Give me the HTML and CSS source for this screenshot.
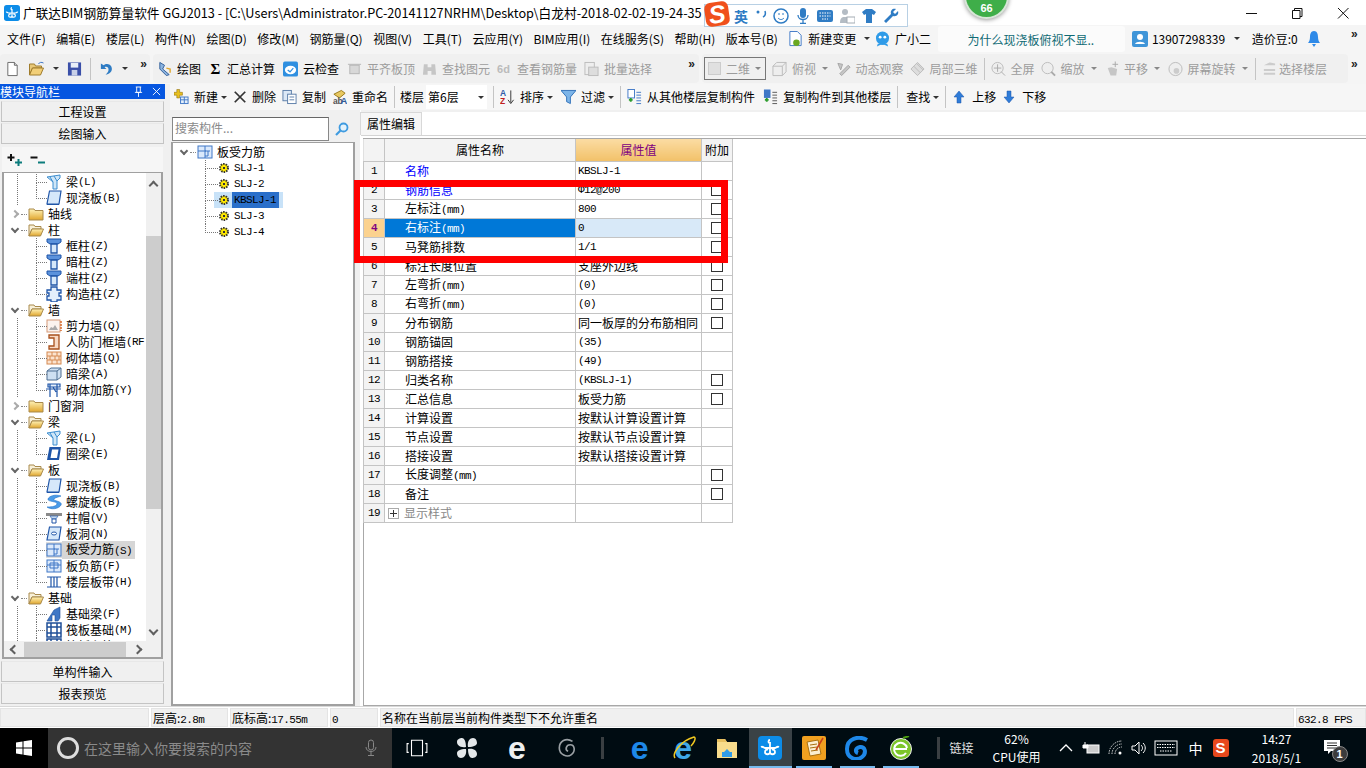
FILE: index.html
```html
<!DOCTYPE html>
<html lang="zh-CN">

<head>
    <meta charset="UTF-8">
    <title>广联达BIM钢筋算量软件 GGJ2013</title>
    <link rel="stylesheet" href="styles.css">
</head>

<body>
    <svg class="defs" width="0" height="0">
        <defs>
            <linearGradient id="gy" x1="0" y1="0" x2="0" y2="1"><stop offset="0" stop-color="#fff3b8"/><stop offset="1" stop-color="#e0a52c"/></linearGradient>
            <symbol id="folder" viewBox="0 0 16 16"><path d="M1 3h5l1 1.500h8V14H1z" fill="url(#gy)" stroke="#a98a4c"/></symbol>
            <symbol id="folderopen" viewBox="0 0 16 16"><path d="M1 3h5l1 1.500h6V7H4L1 14z" fill="#f8f0d8" stroke="#a98a4c"/><path d="M4 7h11.500L12.500 14H1z" fill="url(#gy)" stroke="#a98a4c"/></symbol>
            <symbol id="beam" viewBox="0 0 16 16"><path d="M1 3l13-2v3L11 7v8H7V8z" fill="#cfe6f7" stroke="#3d8ed0"/><path d="M4 3l3 5M8 2l3 5" stroke="#3d8ed0" fill="none"/></symbol>
            <symbol id="slab" viewBox="0 0 16 16"><path d="M3.500 1H15l-2 13H1z" fill="#d6e8fa" stroke="#1f55a8" stroke-width="1.200"/><path d="M1 14.500h12" stroke="#1f55a8"/></symbol>
            <symbol id="ring" viewBox="0 0 16 16"><path d="M3.500 1H15l-2 13H1z" fill="#1f55a8"/><path d="M6 3.500h6.500L11 12H4.500z" fill="#fff"/></symbol>
            <symbol id="col" viewBox="0 0 16 16"><path d="M1 1h14v3l-3 2H4L1 4z" fill="#5b92dc" stroke="#1f55a8"/><path d="M5 6h6v9H5z" fill="#d6e8fa" stroke="#1f55a8" stroke-width="1.300"/></symbol>
            <symbol id="gzz" viewBox="0 0 16 16"><path d="M5 1h6v3h4v3h-2v3h2v4h-4v2H5v-2H1v-4h2V7H1V4h4z" fill="#e4effb" stroke="#1f55a8" stroke-width="1.300"/></symbol>
            <symbol id="shear" viewBox="0 0 16 16"><rect x="1" y="2" width="13" height="12" fill="#fbf3ee" stroke="#d59a78"/><path d="M3 12l2-3 2 1 2-3 3 5z" fill="#a9a9a9"/><path d="M15 3v10" stroke="#d8692a" stroke-dasharray="2 1" stroke-width="1.500"/></symbol>
            <symbol id="door" viewBox="0 0 16 16"><path d="M3 1h10v14H3v-3h5V4H3z" fill="#f8d9c4" stroke="#a8501c" stroke-width="1.300"/></symbol>
            <symbol id="brick" viewBox="0 0 16 16"><rect x="1" y="2" width="14" height="12" fill="#fbe3cf" stroke="#d58a52"/><path d="M1 6h14M1 10h14M6 2v4M11 2v4M4 6v4M9 6v4M13 6v4M6 10v4M11 10v4" stroke="#d58a52" fill="none"/></symbol>
            <symbol id="hbeam" viewBox="0 0 16 16"><path d="M1 5l4-3h10v9l-4 3H1z" fill="#cfe0f2" stroke="#4f6f92"/><path d="M1 5h10v9M11 5l4-3" stroke="#4f6f92" fill="none"/></symbol>
            <symbol id="rebarw" viewBox="0 0 16 16"><path d="M2 2h12v3H2zM0 7h15M4 2v13M11 2v13M7 5l3 5" stroke="#1f55a8" fill="#e4effb" stroke-width="1.200"/></symbol>
            <symbol id="spiral" viewBox="0 0 16 16"><path d="M15 2C9 0 3 2 2 5s10 2 9 5-8 3-10 3c4 3 12 2 14-2S6 7 8 5s5-2 7-3z" fill="#4a9be8" stroke="#1f6fc8" stroke-width=".6"/></symbol>
            <symbol id="cap" viewBox="0 0 16 16"><path d="M0 3h16v3H0z" fill="#8a8a8a"/><path d="M4 6h8L10 9H6z" fill="#c4d8ee" stroke="#1f55a8" stroke-width=".6"/><path d="M6 9h4v4H6z" fill="#fff" stroke="#1f55a8"/></symbol>
            <symbol id="hole" viewBox="0 0 16 16"><path d="M3.500 1H15l-2 13H1z" fill="#d6e8fa" stroke="#1f55a8" stroke-width="1.200"/><ellipse cx="8" cy="7.500" rx="2.500" ry="1.500" fill="#fff" stroke="#1f55a8"/></symbol>
            <symbol id="slj" viewBox="0 0 16 16"><rect x="1" y="2" width="14" height="12" fill="#dbe9fb" stroke="#3f77c6"/><path d="M1 7h8M8 2v12M8 7l5 0M11 7v5H8" stroke="#3f77c6" fill="none"/></symbol>
            <symbol id="neg" viewBox="0 0 16 16"><rect x="1" y="2" width="14" height="12" fill="#dbe9fb" stroke="#3f77c6"/><path d="M1 7h14M8 2v12M4 5h8v5H4z" stroke="#3f77c6" fill="none"/></symbol>
            <symbol id="band" viewBox="0 0 16 16"><path d="M1 3h14M1 13h14M5 3v10M11 3v10M8 3v10" stroke="#1f55a8" fill="none" stroke-width="1.200"/></symbol>
            <symbol id="fbeam" viewBox="0 0 16 16"><path d="M1 15L8 4l6-3v11l-2 3H9V9H6v6z" fill="#3f77c6" stroke="#1f4f98" stroke-width=".6"/></symbol>
            <symbol id="raft" viewBox="0 0 16 16"><rect x="1" y="1" width="14" height="14" fill="#fff" stroke="#1f4f98" stroke-width="1.500"/><path d="M1 5h14M1 11h14M5 1v14M11 1v14" stroke="#1f4f98" stroke-width="1.500"/></symbol>
            <symbol id="gear" viewBox="0 0 12 12"><circle cx="6" cy="6" r="4" fill="#ffe900" stroke="#333" stroke-dasharray="1.500 1" stroke-width="2"/><rect x="5" y="5" width="2" height="2" fill="#333"/></symbol>
            <symbol id="cam" viewBox="0 0 16 16"><path d="M4 13l9-9 2 2-9 9zM2 2l5 1-2 6z" fill="#c6c6c6" stroke="#a4a4a4"/></symbol>
            <symbol id="tick" viewBox="0 0 16 16"><rect x="3" y="4" width="10" height="9" fill="#d8d8d8" stroke="#b4b4b4"/><path d="M1 3h14" stroke="#b4b4b4"/></symbol>
            <symbol id="gld" viewBox="0 0 24 24"><rect width="24" height="24" rx="4" fill="#0c8ce8"/><path d="M12 4c-2 0-2 3 0 3v9c0 3-5 3-5 0 0-2 2-3 3-2M12 16c0 3 5 3 5 0 0-2-2-3-3-2M3 11c2-1 3 1 4 1h10c1 0 2-2 4-1" fill="none" stroke="#fff" stroke-width="1.800"/></symbol>
        </defs>
    </svg>

    <div class="titlebar">
        <svg class="applogo"><use href="#gld"/></svg>
        <span class="apptitle">广联达BIM钢筋算量软件 GGJ2013 - [C:\Users\Administrator.PC-20141127NRHM\Desktop\白龙村-2018-02-02-19-24-35</span>
        <span class="winbtns">
            <svg viewBox="0 0 46 24"><path d="M18 12.500h11" stroke="#111"/></svg>
            <svg viewBox="0 0 46 24"><path d="M20.500 9.500V7.500h7.500v8h-2M18.500 9.500h7.500v8h-7.500z" fill="none" stroke="#111"/></svg>
            <svg viewBox="0 0 46 24"><path d="M18 7l10.500 10.500M28.500 7L18 17.500" stroke="#111"/></svg>
        </span>
    </div>

    <div class="badge66">66</div>

    <div class="imebar">
        <span class="imelogo"><span>S</span></span>
        <span class="imeitem imeying">英</span>
        <svg class="imedot" viewBox="0 0 12 10"><circle cx="2" cy="3" r="1.500" fill="#2f7cc4"/><path d="M9 2c1 3 0 5-2 6" fill="none" stroke="#2f7cc4" stroke-width="1.500"/></svg>
        <svg class="imeicon" viewBox="0 0 16 16"><circle cx="8" cy="8" r="7" fill="#fff" stroke="#2f7cc4" stroke-width="1.500"/><path d="M6 5v2M10 5v2M5 10c2 2 4 2 6 0" stroke="#2f7cc4" fill="none"/></svg>
        <svg class="imeicon" viewBox="0 0 16 16"><rect x="5" y="0" width="6" height="10" rx="3" fill="#2f7cc4"/><path d="M3 7c0 6 10 6 10 0M8 12v3M5 15.500h6" stroke="#2f7cc4" fill="none" stroke-width="1.300"/></svg>
        <svg class="imeicon" viewBox="0 0 16 16"><rect x="0" y="2" width="16" height="12" rx="2" fill="#2f7cc4"/><path d="M2.500 5h11M2.500 8h11M5 11h6" stroke="#fff" stroke-dasharray="1.500 1"/></svg>
        <svg class="imeicon" viewBox="0 0 16 16"><circle cx="6" cy="4" r="3" fill="#b4bcc4"/><path d="M1 15c0-6 3-6 5-6s5 0 5 6z" fill="#b4bcc4"/><rect x="8" y="9" width="8" height="6" fill="#fff" stroke="#a4acb4"/></svg>
        <svg class="imeicon" viewBox="0 0 16 16"><path d="M5 1h6l4 3-2 3-2-1v9H5V6L3 7 1 4z" fill="#2f7cc4"/></svg>
        <svg class="imeicon" viewBox="0 0 16 16"><path d="M15 3l-3 3-2-2 3-3c-3-1-6 1-5 5L1 13l2 2 7-7c4 1 6-2 5-5z" fill="#2f7cc4"/></svg>
    </div>

    <div class="menubar">
        <span>文件(F)</span><span>编辑(E)</span><span>楼层(L)</span><span>构件(N)</span><span>绘图(D)</span><span>修改(M)</span><span>钢筋量(Q)</span><span>视图(V)</span><span>工具(T)</span><span>云应用(Y)</span><span>BIM应用(I)</span><span>在线服务(S)</span><span>帮助(H)</span><span>版本号(B)</span>
        <span class="ti ti-change"><svg class="ic" viewBox="0 0 16 16"><path d="M2 0h8l4 4v11H2z" fill="#fff" stroke="#3f77c6"/><circle cx="9" cy="12" r="3.500" fill="#6aa820"/></svg>新建变更<i class="caret"></i></span>
        <span class="ti ti-xiao"><svg class="ic" viewBox="0 0 16 16"><circle cx="8" cy="7" r="7" fill="#2f9be8"/><circle cx="5.500" cy="6" r="1.500" fill="#fff"/><circle cx="10.500" cy="6" r="1.500" fill="#fff"/><path d="M3 13l-1 3 4-2h4l4 2-1-3z" fill="#2f9be8"/></svg>广小二</span>
        <span class="question">为什么现浇板俯视不显..</span>
        <span class="ti ti-user"><svg class="ic ic-user" viewBox="0 0 16 16"><rect width="16" height="16" rx="2" fill="#3f95d8"/><circle cx="8" cy="6" r="3" fill="#fff"/><path d="M3 13c1-3 9-3 10 0z" fill="#fff"/></svg>13907298339<i class="caret"></i></span>
        <span class="beans">造价豆:0</span>
        <svg class="ic bell" viewBox="0 0 12 16"><path d="M6 0c3 0 4 3 4 6s1 5 2 6H0c1-1 2-3 2-6s1-6 4-6z" fill="#2f8ae8"/><path d="M4 13h4l-2 3z" fill="#2f8ae8"/></svg>
        <span class="more more-end">»</span>
    </div>

    <div class="toolbar">
        <div class="seg seg-file">
            <svg class="ic" viewBox="0 0 16 16"><path d="M3 1h7l3 3v11H3z" fill="#fff" stroke="#666"/><path d="M10 1v3h3" fill="#ddd" stroke="#666"/></svg>
            <svg class="ic ic-open" viewBox="0 0 16 16"><path d="M1 3h5l1 2h6v2H4l-3 7z" fill="#e8c878" stroke="#a07c2c"/><path d="M4 7h11l-3 7H1z" fill="#f2cf78" stroke="#a07c2c"/><path d="M10 3c1-2 3-2 5-1" fill="none" stroke="#3f77c6"/></svg>
            <i class="caret"></i>
            <svg class="ic" viewBox="0 0 16 16"><rect x="1" y="1" width="14" height="14" fill="#3a4fa8"/><rect x="4" y="1.500" width="8" height="5" fill="#e8eef8"/><rect x="5" y="9" width="6" height="6" fill="#c8d0e8"/></svg>
            <i class="sep"></i>
            <svg class="ic" viewBox="0 0 16 16"><path d="M2 2v6h6L6 6c2-1 5 0 4 4-1 2-2 3-3 4 6-1 8-5 6-9-2-3-6-3-8-1z" fill="#2f7cc4"/></svg>
            <i class="caret"></i>
            <span class="more">»</span>
        </div>
        <div class="seg seg-main">
            <span class="ti"><svg class="ic" viewBox="0 0 16 16"><path d="M3 1l5 3-2 4 7 6-3 1-7-7z" fill="#8cb4e0" stroke="#2f5c98"/><path d="M10 7l4 1v4" stroke="#e0a830" fill="none" stroke-width="1.500"/></svg>绘图</span>
            <span class="ti"><b class="sigma">Σ</b>汇总计算</span>
            <span class="ti"><svg class="ic" viewBox="0 0 16 16"><rect width="16" height="16" rx="2" fill="#2f8fe0"/><ellipse cx="8" cy="9" rx="6" ry="4.500" fill="#fff"/><path d="M5 9l2.500 2L11 7" stroke="#2f8fe0" fill="none" stroke-width="1.300"/></svg>云检查</span>
            <span class="ti off"><svg class="ic"><use href="#tick"/></svg>平齐板顶</span>
            <span class="ti off off-tight"><svg class="ic" viewBox="0 0 16 16"><path d="M2 3h4v11H1zM10 3h4l1 11h-5zM6 6h4v4H6z" fill="#c6c6c6"/></svg>查找图元</span>
            <span class="ti off off-tight"><span class="sixd">6d</span>查看钢筋量</span>
            <span class="ti off off-tight"><svg class="ic" viewBox="0 0 16 16"><rect x="1" y="1" width="10" height="13" fill="#eee" stroke="#bbb"/><rect x="5" y="6" width="10" height="9" fill="#ddd" stroke="#bbb"/></svg>批量选择</span>
            <span class="more">»</span>
        </div>
        <div class="seg seg-view">
            <span class="combo"><i class="swatch"></i>二维<i class="caret"></i></span>
            <span class="ti off"><svg class="ic" viewBox="0 0 16 16"><path d="M1 5l4-4h10v10l-4 4H1zM1 5h10v10M11 5l4-4" fill="#eee" stroke="#bbb"/></svg>俯视<i class="caret"></i></span>
            <span class="ti off"><svg class="ic"><use href="#cam"/></svg>动态观察</span>
            <span class="ti off"><svg class="ic" viewBox="0 0 16 16"><path d="M8 1l7 7-7 7-7-7z" fill="#ddd" stroke="#bbb"/><path d="M4 5l7 7M7 2l7 7" stroke="#bbb"/></svg>局部三维</span>
            <i class="sep"></i>
            <span class="ti off"><svg class="ic" viewBox="0 0 16 16"><circle cx="7" cy="7" r="6" fill="#eee" stroke="#bbb"/><path d="M7 3v8M3 7h8M11 11l4 4" stroke="#aaa"/></svg>全屏</span>
            <span class="ti off"><svg class="ic" viewBox="0 0 16 16"><circle cx="7" cy="7" r="6" fill="#eee" stroke="#bbb"/><path d="M11 11l4 4" stroke="#aaa" stroke-width="2"/></svg>缩放<i class="caret"></i></span>
            <span class="ti off"><svg class="ic" viewBox="0 0 16 16"><path d="M4 7l3 8h6l1-7-6-2z" fill="#c6c6c6"/><path d="M12 0v6M9 3h6" stroke="#aaa"/></svg>平移<i class="caret"></i></span>
            <span class="ti off"><svg class="ic" viewBox="0 0 16 16"><circle cx="8" cy="8" r="7" fill="#eee" stroke="#bbb"/><circle cx="9" cy="10" r="3" fill="#ccc"/></svg>屏幕旋转<i class="caret"></i></span>
            <i class="sep"></i>
            <span class="ti off ti-floor"><svg class="ic" viewBox="0 0 16 16"><path d="M2 4l6-3 6 1v2zM2 8h12v2H2zM2 12h12v2H2z" fill="#ccc"/></svg>选择楼层</span>
        </div>
        <span class="more more-end">»</span>
    </div>

    <div class="workspace">
        <aside class="nav">
            <div class="navtitle"><span>模块导航栏</span>
                <svg class="pin" viewBox="0 0 10 12"><path d="M2 1h6M3 1v6h4V1M1 7h8M5 7v5" fill="none" stroke="#fff"/></svg>
                <svg class="navx" viewBox="0 0 10 10"><path d="M1 1l8 8M9 1l-8 8" stroke="#fff"/></svg>
            </div>
            <div class="navbtn">工程设置</div>
            <div class="navbtn">绘图输入</div>
            <div class="navtools">
                <svg viewBox="0 0 17 14"><path d="M4 1v7M0.500 4.500h7" stroke="#111" stroke-width="2"/><path d="M11.500 6v7M8 9.500h7" stroke="#0c7c7c" stroke-width="2"/></svg>
                <svg viewBox="0 0 17 14"><path d="M0.500 4.500h7" stroke="#111" stroke-width="2"/><path d="M8 9.500h7" stroke="#0c7c7c" stroke-width="2"/></svg>
            </div>
            <div class="treebox">
                <div class="treerow">
                    <div class="tree">
                        <div class="kid g"><svg class="ti-ic"><use href="#beam"/></svg>梁<span class="m">(L)</span></div>
                        <div class="kid g last"><svg class="ti-ic"><use href="#slab"/></svg>现浇板<span class="m">(B)</span></div>
                        <div class="fold"><i class="chev r"></i><i class="dash"></i><svg class="fi"><use href="#folder"/></svg>轴线</div>
                        <div class="fold"><i class="chev"></i><i class="dash"></i><svg class="fi"><use href="#folderopen"/></svg>柱</div>
                        <div class="kid"><svg class="ti-ic"><use href="#col"/></svg>框柱<span class="m">(Z)</span></div>
                        <div class="kid"><svg class="ti-ic"><use href="#col"/></svg>暗柱<span class="m">(Z)</span></div>
                        <div class="kid"><svg class="ti-ic"><use href="#col"/></svg>端柱<span class="m">(Z)</span></div>
                        <div class="kid last"><svg class="ti-ic"><use href="#gzz"/></svg>构造柱<span class="m">(Z)</span></div>
                        <div class="fold"><i class="chev"></i><i class="dash"></i><svg class="fi"><use href="#folderopen"/></svg>墙</div>
                        <div class="kid g"><svg class="ti-ic"><use href="#shear"/></svg>剪力墙<span class="m">(Q)</span></div>
                        <div class="kid g"><svg class="ti-ic"><use href="#door"/></svg>人防门框墙<span class="m">(RF</span></div>
                        <div class="kid g"><svg class="ti-ic"><use href="#brick"/></svg>砌体墙<span class="m">(Q)</span></div>
                        <div class="kid g"><svg class="ti-ic"><use href="#hbeam"/></svg>暗梁<span class="m">(A)</span></div>
                        <div class="kid g last"><svg class="ti-ic"><use href="#rebarw"/></svg>砌体加筋<span class="m">(Y)</span></div>
                        <div class="fold"><i class="chev r"></i><i class="dash"></i><svg class="fi"><use href="#folder"/></svg>门窗洞</div>
                        <div class="fold"><i class="chev"></i><i class="dash"></i><svg class="fi"><use href="#folderopen"/></svg>梁</div>
                        <div class="kid g"><svg class="ti-ic"><use href="#beam"/></svg>梁<span class="m">(L)</span></div>
                        <div class="kid g last"><svg class="ti-ic"><use href="#ring"/></svg>圈梁<span class="m">(E)</span></div>
                        <div class="fold"><i class="chev"></i><i class="dash"></i><svg class="fi"><use href="#folderopen"/></svg>板</div>
                        <div class="kid g"><svg class="ti-ic"><use href="#slab"/></svg>现浇板<span class="m">(B)</span></div>
                        <div class="kid g"><svg class="ti-ic"><use href="#spiral"/></svg>螺旋板<span class="m">(B)</span></div>
                        <div class="kid g"><svg class="ti-ic"><use href="#cap"/></svg>柱帽<span class="m">(V)</span></div>
                        <div class="kid g"><svg class="ti-ic"><use href="#hole"/></svg>板洞<span class="m">(N)</span></div>
                        <div class="kid g cur"><svg class="ti-ic"><use href="#slj"/></svg><span class="curtext">板受力筋<span class="m">(S)</span></span></div>
                        <div class="kid g"><svg class="ti-ic"><use href="#neg"/></svg>板负筋<span class="m">(F)</span></div>
                        <div class="kid g last"><svg class="ti-ic"><use href="#band"/></svg>楼层板带<span class="m">(H)</span></div>
                        <div class="fold"><i class="chev"></i><i class="dash"></i><svg class="fi"><use href="#folderopen"/></svg>基础</div>
                        <div class="kid g"><svg class="ti-ic"><use href="#fbeam"/></svg>基础梁<span class="m">(F)</span></div>
                        <div class="kid g"><svg class="ti-ic"><use href="#raft"/></svg>筏板基础<span class="m">(M)</span></div>
                        <div class="kid g"><svg class="ti-ic"><use href="#raft"/></svg>筏板主筋<span class="m">(R)</span></div>
                    </div>
                    <div class="vscroll"><i class="arrow up"></i><i class="vthumb"></i><i class="arrow down"></i></div>
                </div>
                <div class="hscroll"><i class="arrow left"></i><i class="hthumb"></i><i class="arrow right"></i></div>
            </div>
            <div class="navbtn navbtn-first">单构件输入</div>
            <div class="navbtn">报表预览</div>
        </aside>

        <div class="content">
            <div class="toolbar2">
                <span class="ti"><svg class="ic" viewBox="0 0 16 16"><path d="M3 0h3v3h3v3H6v3H3V6H0V3h3z" fill="#e8c020" stroke="#907010" stroke-width=".6"/><rect x="7" y="8" width="8" height="7" fill="#e4effb" stroke="#3f77c6"/><path d="M7 11h8M11 8v7" stroke="#3f77c6"/></svg>新建<i class="caret"></i></span>
                <span class="ti ti-del"><svg class="ic" viewBox="0 0 16 16"><path d="M2 2l12 12M14 2L2 14" stroke="#333" stroke-width="2"/></svg>删除</span>
                <span class="ti"><svg class="ic" viewBox="0 0 16 16"><rect x="1" y="1" width="9" height="11" fill="#dce8f6" stroke="#5a7ca8"/><rect x="6" y="5" width="9" height="10" fill="#fff" stroke="#5a7ca8"/><path d="M8 8h5M8 11h5" stroke="#5a7ca8"/></svg>复制</span>
                <span class="ti"><svg class="ic" viewBox="0 0 16 16"><path d="M2 5l8-4 4 3-6 5z" fill="#e8c860" stroke="#987818"/><text x="1" y="15" class="ictext">ab</text><text x="9" y="15" class="ictext ictext-a">A</text></svg>重命名</span>
                <i class="sep"></i>
                <span class="floorlabel">楼层</span>
                <span class="floorbox">第6层<i class="caret"></i></span>
                <i class="sep"></i>
                <span class="ti"><svg class="ic" viewBox="0 0 16 16"><text x="0" y="7" class="ictext ictext-b">A</text><text x="0" y="15" class="ictext ictext-r">Z</text><path d="M11.500 1v13M8.500 11l3 4 3-4" stroke="#333" fill="none"/></svg>排序<i class="caret"></i></span>
                <span class="ti ti-filter"><svg class="ic" viewBox="0 0 16 16"><path d="M0 1h16l-6 7v7l-4-2V8z" fill="#7cb4e8" stroke="#2f6fb8"/></svg>过滤<i class="caret"></i></span>
                <i class="sep"></i>
                <span class="ti"><svg class="ic" viewBox="0 0 16 16"><rect x="1" y="0" width="7" height="9" fill="#fff" stroke="#3f77c6"/><path d="M4 9v4M2 11h4" stroke="#2c9c2c" stroke-width="2"/><path d="M10 3h5M10 6h5M10 9h5M10 12h5M10 15h5" stroke="#3f77c6"/></svg>从其他楼层复制构件</span>
                <span class="ti ti-copyto"><svg class="ic" viewBox="0 0 16 16"><rect x="1" y="0" width="7" height="9" fill="#3f77c6"/><path d="M4 9v4M2 11h4" stroke="#2c9c2c" stroke-width="2"/><path d="M10 3h5M10 6h5M10 9h5M10 12h5M10 15h5" stroke="#555"/></svg>复制构件到其他楼层</span>
                <i class="sep"></i>
                <span class="ti ti-find">查找<i class="caret"></i></span>
                <i class="sep"></i>
                <span class="ti ti-mv"><svg class="ic ic-mv" viewBox="0 0 12 14"><path d="M6 1l5 6H8v6H4V7H1z" fill="#2f7cd8" stroke="#1f55a8" stroke-width=".5"/></svg>上移</span>
                <span class="ti ti-mv"><svg class="ic ic-mv" viewBox="0 0 12 14"><path d="M6 13l5-6H8V1H4v6H1z" fill="#2f7cd8" stroke="#1f55a8" stroke-width=".5"/></svg>下移</span>
            </div>

            <div class="panels">
                <div class="complist">
                    <div class="searchrow">
                        <input class="search" placeholder="搜索构件...">
                        <svg class="searchicon" viewBox="0 0 14 14"><circle cx="8.500" cy="5.500" r="4" fill="#e4f2fb" stroke="#3f9be0" stroke-width="1.800"/><path d="M5.500 8.500L1 13" stroke="#3f9be0" stroke-width="2.200"/></svg>
                    </div>
                    <div class="comptree">
                        <div class="croot"><i class="chev"></i><i class="dash"></i><svg class="fi"><use href="#slj"/></svg>板受力筋</div>
                        <div class="citem"><svg class="gear"><use href="#gear"/></svg><span class="m">SLJ-1</span></div>
                        <div class="citem"><svg class="gear"><use href="#gear"/></svg><span class="m">SLJ-2</span></div>
                        <div class="citem sel"><svg class="gear"><use href="#gear"/></svg><span class="m">KBSLJ-1</span></div>
                        <div class="citem"><svg class="gear"><use href="#gear"/></svg><span class="m">SLJ-3</span></div>
                        <div class="citem last"><svg class="gear"><use href="#gear"/></svg><span class="m">SLJ-4</span></div>
                    </div>
                </div>

                <div class="props">
                    <div class="tabs"><span class="tab">属性编辑</span></div>
                    <div class="sheet">
                        <table class="grid">
                            <colgroup><col class="c-no"><col class="c-name"><col class="c-val"><col class="c-add"></colgroup>
                            <thead><tr><th></th><th>属性名称</th><th class="valhead">属性值</th><th>附加</th></tr></thead>
                            <tbody>
                                <tr><td class="no">1</td><td class="name link">名称</td><td class="m val">KBSLJ-1</td><td></td></tr>
                                <tr><td class="no">2</td><td class="name link">钢筋信息</td><td class="m val">Φ12@200</td><td><i class="chk"></i></td></tr>
                                <tr><td class="no">3</td><td class="name">左标注<span class="m">(mm)</span></td><td class="m val">800</td><td><i class="chk"></i></td></tr>
                                <tr class="active"><td class="no">4</td><td class="name">右标注<span class="m">(mm)</span></td><td class="m val">0</td><td><i class="chk"></i></td></tr>
                                <tr><td class="no">5</td><td class="name">马凳筋排数</td><td class="m val">1/1</td><td><i class="chk"></i></td></tr>
                                <tr><td class="no">6</td><td class="name">标注长度位置</td><td class="val">支座外边线</td><td><i class="chk"></i></td></tr>
                                <tr><td class="no">7</td><td class="name">左弯折<span class="m">(mm)</span></td><td class="m val">(0)</td><td><i class="chk"></i></td></tr>
                                <tr><td class="no">8</td><td class="name">右弯折<span class="m">(mm)</span></td><td class="m val">(0)</td><td><i class="chk"></i></td></tr>
                                <tr><td class="no">9</td><td class="name">分布钢筋</td><td class="val">同一板厚的分布筋相同</td><td><i class="chk"></i></td></tr>
                                <tr><td class="no">10</td><td class="name">钢筋锚固</td><td class="m val">(35)</td><td></td></tr>
                                <tr><td class="no">11</td><td class="name">钢筋搭接</td><td class="m val">(49)</td><td></td></tr>
                                <tr><td class="no">12</td><td class="name">归类名称</td><td class="m val">(KBSLJ-1)</td><td><i class="chk"></i></td></tr>
                                <tr><td class="no">13</td><td class="name">汇总信息</td><td class="val">板受力筋</td><td><i class="chk"></i></td></tr>
                                <tr><td class="no">14</td><td class="name">计算设置</td><td class="val">按默认计算设置计算</td><td></td></tr>
                                <tr><td class="no">15</td><td class="name">节点设置</td><td class="val">按默认节点设置计算</td><td></td></tr>
                                <tr><td class="no">16</td><td class="name">搭接设置</td><td class="val">按默认搭接设置计算</td><td></td></tr>
                                <tr><td class="no">17</td><td class="name">长度调整<span class="m">(mm)</span></td><td class="val"></td><td><i class="chk"></i></td></tr>
                                <tr><td class="no">18</td><td class="name">备注</td><td class="val"></td><td><i class="chk"></i></td></tr>
                                <tr><td class="no">19</td><td class="name muted"><i class="expand"></i>显示样式</td><td class="val"></td><td></td></tr>
                            </tbody>
                        </table>
                    </div>
                    <div class="redbox"></div>
                </div>
            </div>
        </div>
    </div>

    <div class="statusbar">
        <span class="cell c1"></span>
        <span class="cell c2">层高:<span class="m">2.8m</span></span>
        <span class="cell c3">底标高:<span class="m">17.55m</span></span>
        <span class="cell c4"><span class="m">0</span></span>
        <span class="cell c5">名称在当前层当前构件类型下不允许重名</span>
        <span class="cell c6"><span class="m">632.8 FPS</span></span>
    </div>

    <div class="taskbar">
        <div class="start"><svg viewBox="0 0 16 16"><path d="M0 2.500l6.500-1V7.500H0zM7.500 1.300L16 0v7.500H7.500zM0 8.500h6.500v6L0 13.500zM7.500 8.500H16V16l-8.500-1.300z" fill="#fff"/></svg></div>
        <div class="tsearch">
            <i class="cortana"></i>
            <span>在这里输入你要搜索的内容</span>
            <svg class="mic" viewBox="0 0 12 18"><rect x="3.500" y="1" width="5" height="10" rx="2.500" fill="none" stroke="#888"/><path d="M1 8c0 6 10 6 10 0M6 13v3M3 16.500h6" fill="none" stroke="#888"/></svg>
        </div>
        <div class="tk"><svg viewBox="0 0 20 20"><path d="M5 3h10v14H5zM2.500 6H1v8h1.500M17.500 6H19v8h-1.500" fill="none" stroke="#fff"/></svg></div>
        <div class="tk"><svg viewBox="0 0 22 22"><path d="M10 10C4 11 1 8 1 5s3-4 5-4 4 3 4 9zM12 10c-1-6 2-9 5-9s4 3 4 5-3 4-9 4zM12 12c6-1 9 2 9 5s-3 4-5 4-4-3-4-9zM10 12c1 6-2 9-5 9s-4-3-4-5 3-4 9-4z" fill="#e4e8ea"/></svg></div>
        <div class="tk"><span class="ie ie-w">e</span></div>
        <div class="tk"><svg viewBox="0 0 20 20"><path d="M15 4C9 0 3 4 3 10s7 9 11 6 3-9-1-9-5 5-2 6" fill="none" stroke="#9aa0a4" stroke-width="1.500"/></svg></div>
        <i class="tdiv"></i>
        <div class="tk2"><span class="ie ie-edge">e</span></div>
        <div class="tk2 tk-ie"><span class="ie ie-ie">e</span><svg class="ie-ring" viewBox="0 0 24 24"><path d="M3 22C0 18 8 5 22 1c3 1-1 7-3 9" fill="none" stroke="#f0c820" stroke-width="1.500"/></svg></div>
        <div class="tk2"><svg viewBox="0 0 24 24"><path d="M2 3h8l2 3h10v16H2z" fill="#f8dc8c"/><path d="M2 3h8l2 3H2z" fill="#e8c060"/><path d="M7 21v-5h2l3-3 3 3h2v5z" fill="#2f9be8"/></svg></div>
        <div class="tk2 run act"><svg><use href="#gld"/></svg></div>
        <div class="tk2 run"><svg viewBox="0 0 24 24"><rect width="24" height="24" rx="2" fill="#f0a020"/><path d="M5 6l11-2 3 14-11 2z" fill="#fbeed0" stroke="#a87010"/><path d="M8 9l7-1M8 12l7-1M9 15l7-1" stroke="#a87010"/><path d="M21 2l-7 12" stroke="#c84018" stroke-width="1.500"/></svg></div>
        <div class="tk2 run"><svg viewBox="0 0 24 24"><path d="M22 4C13-1 2 3 2 13s10 12 15 8 3-11-2-10-5 5-2 6" fill="none" stroke="#1e88e8" stroke-width="4"/></svg></div>
        <div class="tk2 run"><svg viewBox="0 0 24 24"><circle cx="12" cy="13" r="10.500" fill="#7cc428" stroke="#eee"/><path d="M6 13h12M17 17a6.500 6.500 0 1 1 1-5" fill="none" stroke="#fff" stroke-width="2"/><path d="M14 2l6-2" stroke="#4a9c10" stroke-width="2"/></svg></div>
        <i class="tdiv tdiv2"></i>
        <span class="links">链接</span>
        <div class="cpu"><span>62%</span><span>CPU使用</span></div>
        <div class="tray">
            <svg class="t-caret" viewBox="0 0 14 8"><path d="M1 7l6-6 6 6" fill="none" stroke="#fff" stroke-width="1.300"/></svg>
            <svg class="t-bat" viewBox="0 0 18 16"><rect x="5" y="5" width="12" height="8" fill="#ccc" stroke="#fff"/><path d="M3 2v3M1 5h5v3H1z" stroke="#fff" fill="#fff"/></svg>
            <svg class="t-wifi" viewBox="0 0 16 16"><path d="M1 14A13 13 0 0 1 14 1M4 14A10 10 0 0 1 14 4M7 14A7 7 0 0 1 14 7" fill="none" stroke="#ddd" stroke-dasharray="1.500 1"/><circle cx="12" cy="13" r="1.500" fill="#fff"/></svg>
            <svg class="t-vol" viewBox="0 0 16 16"><path d="M1 6h3l4-4v12l-4-4H1zM10 5c2 2 2 4 0 6M12 3c3 3 3 7 0 10" fill="none" stroke="#fff"/></svg>
            <svg class="t-kb" viewBox="0 0 24 16"><rect x="1" y="1" width="22" height="14" fill="none" stroke="#fff"/><path d="M3 4.500h18M3 7.500h18M6 11h12" stroke="#fff" stroke-dasharray="1.500 1"/></svg>
            <span class="t-zh">中</span>
            <span class="t-s">S</span>
        </div>
        <div class="clock"><span>14:27</span><span>2018/5/1</span></div>
        <div class="notify">
            <svg viewBox="0 0 16 16"><path d="M0 1h16v11H7l-3 3v-3H0z" fill="#fff"/><path d="M3 4h10M3 6.500h10M3 9h10" stroke="#333"/></svg>
            <b>1</b>
        </div>
    </div>
</body>

</html>
```

FILE: styles.css
```css
* {
    box-sizing: border-box;
    padding: 0;
    margin: 0;
}

body {
    width: 1366px;
    height: 768px;
    overflow: hidden;
    position: relative;
    display: flex;
    flex-direction: column;
    background: #f0f0f0;
    color: #000;
    font-family: "Noto Sans CJK SC", "Liberation Sans", sans-serif;
    font-size: 12px;
    line-height: 16px;
}

i {
    font-style: normal;
}

.defs {
    position: absolute;
}

.m {
    font-family: "Liberation Mono", monospace;
    font-size: 11px;
    letter-spacing: -0.6px;
}

.titlebar {
    height: 25px;
    flex: none;
    background: #fff;
    display: flex;
    align-items: center;
    padding-left: 4px;
}

.applogo {
    width: 16px;
    height: 16px;
    margin-right: 3px;
}

.apptitle {
    font-size: 12.700px;
    white-space: nowrap;
}

.winbtns {
    margin-left: auto;
    display: flex;
}

.winbtns svg {
    width: 46px;
    height: 24px;
}

.badge66 {
    position: absolute;
    left: 966px;
    top: -24px;
    width: 41px;
    height: 41px;
    border-radius: 50%;
    background: #3fae49;
    box-shadow: 0 0 0 2px #d8e6d8, 0 1px 4px 2px #999;
    color: #fff;
    font-family: "Liberation Sans", sans-serif;
    font-weight: bold;
    font-size: 11px;
    text-align: center;
    padding-top: 24px;
}

.imebar {
    position: absolute;
    left: 704px;
    top: 4px;
    width: 204px;
    height: 23px;
    background: #fff;
    border: 1px solid #b8d0e4;
    display: flex;
    align-items: center;
}

.imelogo {
    position: absolute;
    left: 0;
    top: -3px;
    width: 24px;
    height: 24px;
    border-radius: 6px;
    background: #f0501c;
    color: #fff;
    font: bold italic 25px/24px "Liberation Sans", sans-serif;
    text-align: center;
    transform: rotate(-8deg);
}

.imeitem {
    color: #2f7cc4;
    font-weight: bold;
    font-size: 14px;
}

.imeying {
    margin-left: 29px;
}

.imedot {
    width: 12px;
    height: 10px;
    margin-left: 8px;
    margin-bottom: 3px;
}

.imeicon {
    width: 16px;
    height: 16px;
    margin-left: 6px;
}

.imedot + .imeicon {
    margin-left: 5px;
}

.menubar {
    height: 27px;
    flex: none;
    background: #f5f5f5;
    display: flex;
    align-items: center;
    padding-left: 7px;
    gap: 10.500px;
    white-space: nowrap;
}

.ti {
    display: inline-flex;
    align-items: center;
    gap: 5px;
    white-space: nowrap;
}

.ic {
    width: 15px;
    height: 16px;
    flex: none;
}

.caret {
    display: inline-block;
    width: 0;
    height: 0;
    border: 3px solid transparent;
    border-top: 3px solid #333;
    border-bottom: 0;
    flex: none;
}

.ti-change .caret {
    margin-left: 3px;
}

.ti-xiao {
    margin-left: -6px;
}

.question {
    width: 187px;
    height: 26px;
    background: #fbfbfb;
    border-radius: 3px;
    color: #0f6a74;
    line-height: 27px;
    padding-left: 29px;
    margin-left: -3px;
}

.ti-user {
    margin-left: -4px;
    gap: 4px;
}

.ti-user .caret {
    margin-left: 5px;
}

.ic-user {
    width: 16px;
}

.beans {
    margin-left: 1px;
}

.bell {
    width: 12px;
}

.more {
    font: bold 12px/12px "Liberation Sans", sans-serif;
    color: #222;
    margin-left: auto;
    margin-bottom: 10px;
}

.more-end {
    position: absolute;
    left: 1351px;
}

.toolbar {
    height: 32px;
    flex: none;
    background: #f5f5f5;
    display: flex;
    align-items: center;
    gap: 3px;
    padding-top: 1px;
    white-space: nowrap;
}

.seg {
    height: 29px;
    background: #f0f0f0;
    border-radius: 4px;
    display: flex;
    align-items: center;
}

.seg-file {
    width: 150px;
    padding: 0 3px 0 5px;
    gap: 8px;
}

.ic-open {
    width: 17px;
}

.seg-main {
    width: 546px;
    padding: 0 4px;
    gap: 8px;
}

.off-tight {
    margin-left: -1px;
}

.seg-view {
    width: 646px;
    padding-left: 2px;
    gap: 6px;
}

.sep {
    width: 1px;
    height: 22px;
    background: #c4c4c4;
    flex: none;
}

.sigma {
    font: bold 15px/16px "Liberation Serif", serif;
    width: 13px;
    text-align: center;
}

.sixd {
    width: 15px;
    color: #bbb;
    font: bold 11px/16px "Liberation Sans", sans-serif;
}

.off {
    color: #9c9c9c;
}

.off .caret {
    border-top-color: #888;
    margin: 0 1.500px 0 1px;
}

.ti-floor {
    gap: 2px;
}

.combo {
    width: 62px;
    height: 23px;
    border: 1px solid #777;
    background: #f0f0f0;
    color: #9c9c9c;
    display: flex;
    align-items: center;
    gap: 5px;
    padding: 0 4px 0 3px;
}

.swatch {
    width: 14px;
    height: 13px;
    background: #e0e0e0;
    border: 1px solid #ccc;
}

.combo .caret {
    margin-left: auto;
    border-top-color: #888;
}

.workspace {
    flex: 1;
    min-height: 0;
    display: flex;
}

.nav {
    width: 165px;
    flex: none;
    display: flex;
    flex-direction: column;
    padding-bottom: 1px;
}

.navtitle {
    height: 15px;
    flex: none;
    background: #0656e0;
    color: #fff;
    display: flex;
    align-items: center;
    padding-right: 4px;
    margin-bottom: 2px;
    line-height: 15px;
}

.pin {
    margin-left: auto;
    width: 9px;
    height: 11px;
}

.navx {
    margin-left: 9px;
    width: 9px;
    height: 9px;
}

.navbtn {
    height: 21px;
    flex: none;
    margin: 0 1px 1px;
    background: #f0f0f0;
    border: 1px solid #c4c4c4;
    border-top-color: #e8e8e8;
    text-align: center;
    line-height: 20px;
}

.navbtn-first {
    margin-top: 2px;
}

.navtools {
    height: 25px;
    flex: none;
    margin: 2px 2px 0;
    background: #f6f6f6;
    display: flex;
    align-items: center;
    padding-left: 5px;
    gap: 6px;
}

.navtools svg {
    width: 17px;
    height: 14px;
}

.treebox {
    height: 487px;
    flex: none;
    margin: 0 2px;
    border: 1px solid #a0a0a0;
    border-width: 1px 2px 2px;
    display: flex;
    flex-direction: column;
    background: #fff;
}

.treerow {
    height: 468px;
    flex: none;
    display: flex;
}

.tree {
    width: 144px;
    overflow: hidden;
    padding-top: 1px;
}

.fold,
.kid {
    height: 16px;
    position: relative;
    white-space: nowrap;
    display: flex;
    align-items: center;
}

.fold {
    padding-left: 7px;
}

.fi {
    width: 16px;
    height: 16px;
    margin-right: 4px;
    flex: none;
}

.chev {
    width: 6px;
    height: 6px;
    border: solid #666;
    border-width: 0 2px 2px 0;
    transform: rotate(45deg);
    margin: -3px 3px 0 1px;
    flex: none;
}

.chev.r {
    transform: rotate(-45deg);
    border-color: #aaa;
    margin: 0 3px 0 1px;
}

.dash {
    width: 6px;
    border-top: 1px dotted #888;
    margin-right: 1px;
    flex: none;
}

.kid {
    padding-left: 42px;
}

.kid::before {
    content: "";
    position: absolute;
    left: 32px;
    top: 0;
    width: 10px;
    height: 8px;
    border-left: 1px dotted #777;
    border-bottom: 1px dotted #777;
}

.kid:not(.last)::after {
    content: "";
    position: absolute;
    left: 32px;
    top: 8px;
    height: 8px;
    border-left: 1px dotted #777;
}

.kid.g {
    background: linear-gradient(#777 50%, transparent 50%) 13px 0 / 1px 2px repeat-y;
}

.ti-ic {
    width: 16px;
    height: 16px;
    margin-right: 4px;
    flex: none;
}

.cur .ti-ic {
    background: #ddd;
}

.curtext {
    background: #d6d6d6;
    flex: 1;
    margin: 0 10px 0 -4px;
    padding-left: 4px;
    line-height: 16px;
}

.vscroll {
    width: 15px;
    margin-left: 1px;
    background: #f0f0f0;
    display: flex;
    flex-direction: column;
    align-items: center;
}

.vthumb {
    width: 15px;
    height: 273px;
    background: #cdcdcd;
    margin-top: 47px;
}

.hscroll {
    flex: 1;
    background: #f0f0f0;
    display: flex;
    align-items: center;
    padding-left: 7px;
}

.hthumb {
    width: 102px;
    height: 15px;
    background: #cdcdcd;
    margin-left: 6px;
}

.arrow {
    width: 7px;
    height: 7px;
    border: solid #606060;
    border-width: 2px 0 0 2px;
    flex: none;
}

.arrow.up {
    transform: rotate(45deg);
    margin-top: 9px;
}

.arrow.down {
    transform: rotate(225deg);
    margin-top: 118px;
}

.arrow.left {
    transform: rotate(-45deg);
}

.arrow.right {
    transform: rotate(135deg);
    margin-left: 8px;
}

.content {
    flex: 1;
    min-width: 0;
    display: flex;
    flex-direction: column;
}

.toolbar2 {
    height: 26px;
    flex: none;
    margin-left: 5px;
    padding-left: 4px;
    background: #f6f6f6;
    display: flex;
    align-items: center;
    gap: 6px;
    white-space: nowrap;
}

.toolbar2 .caret {
    margin-left: -2px;
}

.toolbar2 .floorbox .caret {
    margin-left: auto;
}

.ti-del .ic {
    width: 14px;
}

.ti-filter {
    margin-left: 2px;
}

.ti-copyto,
.ti-find {
    margin-left: 2px;
}

.ti-mv {
    gap: 7px;
}

.ictext {
    font: bold 9px "Liberation Sans", sans-serif;
    fill: #555;
}

.ictext-a {
    fill: #2f5c98;
    font-size: 10px;
}

.ictext-b {
    fill: #2f5ca8;
}

.ictext-r {
    fill: #c02020;
}

.floorlabel {
    margin-left: -1px;
}

.floorbox {
    width: 61px;
    height: 24px;
    background: #fff;
    display: flex;
    align-items: center;
    margin-left: -4px;
    padding: 0 3px 0 2px;
}

.ic-mv {
    width: 12px;
    margin-left: 1px;
}

.panels {
    flex: 1;
    min-height: 0;
    display: flex;
}

.complist {
    width: 184px;
    margin-left: 6px;
    flex: none;
    display: flex;
    flex-direction: column;
}

.searchrow {
    height: 32px;
    padding: 7px 0 0 1px;
    display: flex;
    flex: none;
}

.search {
    width: 157px;
    height: 24px;
    border: 1px solid #888;
    border-top-color: #666;
    padding: 0 0 3px 2px;
    font: 12px "Noto Sans CJK SC", sans-serif;
    background: #fff;
}

.search::placeholder {
    color: #8a8a8a;
}

.searchicon {
    width: 14px;
    height: 14px;
    margin: 5px 0 0 6px;
}

.comptree {
    flex: 1;
    background: #fff;
    border: 2px solid #a0a0a0;
    border-top-width: 1px;
    padding-top: 1px;
}

.croot {
    height: 16px;
    display: flex;
    align-items: center;
    padding-left: 7px;
}

.citem {
    height: 16px;
    display: flex;
    align-items: center;
    margin-left: 32px;
    padding-left: 13px;
    position: relative;
}

.citem::before {
    content: "";
    position: absolute;
    left: 0;
    top: 0;
    width: 12px;
    height: 8px;
    border-left: 1px dotted #777;
    border-bottom: 1px dotted #777;
}

.citem:not(.last)::after {
    content: "";
    position: absolute;
    left: 0;
    top: 8px;
    height: 8px;
    border-left: 1px dotted #777;
}

.gear {
    width: 12px;
    height: 12px;
    margin-right: 4px;
    flex: none;
}

.sel {
    background: linear-gradient(#c8e2f8, #c8e2f8) 9px 0 / 69px 16px no-repeat;
}

.sel .m {
    background: #2a6fca;
    color: #000;
    padding: 0 3px 0 2px;
    margin-left: -2px;
    line-height: 16px;
}

.props {
    flex: 1;
    min-width: 0;
    margin-left: 5px;
    background: #fff;
    position: relative;
    display: flex;
    flex-direction: column;
}

.tabs {
    height: 26px;
    flex: none;
    padding-top: 2px;
    background: linear-gradient(#f0f0f0 2px, #fff 2px);
    border-bottom: 1px solid #d4d4d4;
    margin-left: 1px;
    display: flex;
}

.tab {
    width: 62px;
    height: 23px;
    background: #f6f6f6;
    border: 1px solid #d8d8d8;
    border-bottom: 0;
    text-align: center;
    line-height: 21px;
    margin-left: -1px;
}

.sheet {
    flex: 1;
    margin-left: 3px;
    margin-top: 2px;
    border: solid #a8a8a8;
    border-width: 1px 0 1px 1px;
}

.grid {
    border-collapse: collapse;
    table-layout: fixed;
    width: 369px;
    margin-left: -1px;
    line-height: 14px;
}

.c-no {
    width: 21px;
}

.c-name {
    width: 191px;
}

.c-val {
    width: 126px;
}

.c-add {
    width: 31px;
}

.grid th,
.grid td {
    border: 1px solid #c4c4c4;
    height: 19px;
    padding: 0;
    font-weight: normal;
    overflow: hidden;
    white-space: nowrap;
}

.grid th {
    height: 22px;
    background: #f3f3f3;
    text-align: center;
    border-top: 0;
    border-left-color: #e0e0e0;
}

.grid .valhead {
    background: linear-gradient(#fbdca3, #f2c169);
    color: #800080;
}

.no {
    background: #f3f3f3;
    text-align: center;
    font-family: "Liberation Mono", monospace;
    font-size: 11px;
    letter-spacing: -0.6px;
}

.name {
    padding-left: 20px !important;
}

.val {
    padding-left: 2px !important;
}

.link {
    color: #0000ff;
}

.muted {
    color: #888;
    padding-left: 3px !important;
}

.expand {
    display: inline-block;
    width: 11px;
    height: 11px;
    border: 1px solid #aaa;
    margin-right: 5px;
    vertical-align: -1px;
    background: linear-gradient(#333, #333) center / 7px 1px no-repeat, linear-gradient(#333, #333) center / 1px 7px no-repeat;
}

.chk {
    display: block;
    width: 12px;
    height: 12px;
    border: 1px solid #333;
    background: #fff;
    margin: 1px auto 0;
}

.active .no {
    background: #fbd28f;
    color: #800080;
    font-weight: bold;
}

.active .name {
    background: #0078d7;
    color: #fff;
}

.active .val {
    background: #d8e9f8;
}

.redbox {
    position: absolute;
    left: -6px;
    top: 70px;
    width: 374px;
    height: 83px;
    border: 7px solid #ff0000;
    border-left-width: 6px;
}

.statusbar {
    height: 22px;
    flex: none;
    display: flex;
    gap: 2px;
    padding: 1px 0 1px;
    background: #fff;
    border-top: 1px solid #d8d8d8;
}

.cell {
    background: #f0f0f0;
    border: 1px solid #e4e4e4;
    padding-left: 1px;
    line-height: 18px;
    white-space: nowrap;
}

.c1 {
    width: 149px;
}

.c2 {
    width: 77px;
}

.c3 {
    width: 98px;
}

.c4 {
    width: 48px;
}

.c5 {
    flex: 1;
}

.c6 {
    width: 70px;
}

.taskbar {
    height: 40px;
    flex: none;
    background: #000c12;
    color: #fff;
    display: flex;
    align-items: center;
}

.start {
    width: 48px;
    height: 40px;
    background: #000;
    display: flex;
    align-items: center;
    justify-content: center;
}

.start svg {
    width: 16px;
    height: 16px;
}

.tsearch {
    width: 344px;
    height: 40px;
    background: #333;
    display: flex;
    align-items: center;
    color: #8a8a8a;
    font-size: 14px;
    padding-left: 9px;
}

.cortana {
    width: 22px;
    height: 22px;
    border: 3px solid #ddd;
    border-radius: 50%;
    margin-right: 5px;
}

.mic {
    width: 12px;
    height: 18px;
    margin-left: auto;
    margin-right: 15px;
}

.tk {
    width: 50px;
    height: 40px;
    display: flex;
    align-items: center;
    justify-content: center;
}

.tk svg {
    width: 22px;
    height: 22px;
}

.tdiv {
    width: 3px;
    height: 22px;
    background: #3a3f42;
    margin-left: 9px;
    flex: none;
}

.tk2 {
    width: 43.500px;
    height: 40px;
    display: flex;
    align-items: center;
    justify-content: center;
    flex: none;
    position: relative;
}

.tdiv + .tk2 {
    margin-left: 14px;
}

.tk2 svg {
    width: 24px;
    height: 24px;
}

.run::after {
    content: "";
    position: absolute;
    left: 4px;
    right: 4px;
    bottom: 0;
    height: 2px;
    background: #76b9ed;
}

.act {
    background-color: #3a4246;
}

.act::after {
    left: 0;
    right: 0;
}

.ie {
    font: bold 32px/32px "Liberation Sans", sans-serif;
}

.ie-w {
    color: #eef0f0;
}

.ie-edge {
    color: #1e88e8;
}

.ie-ie {
    color: #3fa8e8;
}

.tk2 .ie-ring {
    position: absolute;
    left: 10px;
    top: 8px;
}

.tdiv2 {
    margin-left: 14px;
}

.links {
    margin-left: 10px;
    color: #e0e0e0;
}

.cpu {
    width: 68px;
    margin-left: 9px;
    display: flex;
    flex-direction: column;
    align-items: center;
    gap: 4px;
    line-height: 14px;
}

.tray {
    margin-left: 8px;
    display: flex;
    align-items: center;
}

.t-caret {
    width: 14px;
    height: 8px;
}

.t-bat {
    width: 18px;
    height: 16px;
    margin-left: 9px;
}

.t-wifi {
    width: 16px;
    height: 16px;
    margin-left: 8px;
}

.t-vol {
    width: 16px;
    height: 16px;
    margin-left: 7px;
}

.t-kb {
    width: 24px;
    height: 16px;
    margin-left: 7px;
}

.t-zh {
    margin-left: 11px;
    font-size: 14px;
}

.t-s {
    margin-left: 10px;
    width: 16px;
    height: 18px;
    border-radius: 3px;
    background: #e8481c;
    font: bold 15px/18px "Liberation Sans", sans-serif;
    text-align: center;
}

.clock {
    width: 72px;
    margin-left: 12px;
    display: flex;
    flex-direction: column;
    align-items: center;
    gap: 5px;
    line-height: 14px;
}

.notify {
    margin-left: 11px;
    position: relative;
    width: 24px;
    height: 24px;
}

.notify svg {
    width: 16px;
    height: 16px;
    position: absolute;
    left: 0;
    top: 3px;
}

.notify b {
    position: absolute;
    left: 8px;
    top: 10px;
    width: 16px;
    height: 16px;
    border-radius: 50%;
    background: #3c3c3c;
    border: 1px solid #888;
    font: bold 11px/14px "Liberation Sans", sans-serif;
    text-align: center;
}
```
